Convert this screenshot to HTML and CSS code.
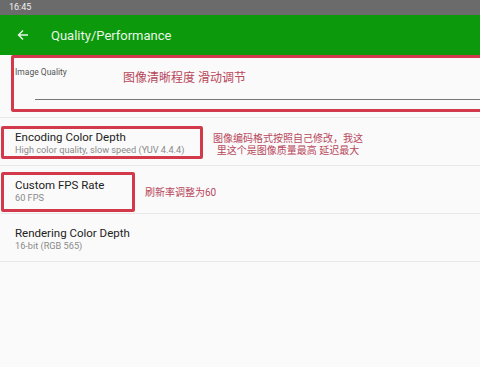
FILE: index.html
```html
<html>
    <head>
        <meta charset="UTF-8">
        <meta name="viewport" content="width=device-width, initial-scale=1.0">

        <title>Quality/Performance</title>

        <link rel="stylesheet" href="styles.css">
    </head>

    <body>
        <div class="statusbar">16:45</div>
        <div class="toolbar">
            <svg class="back" width="12" height="12" viewBox="0 0 12 12">
                <path d="M11 6H1.5M6 1.5L1.5 6L6 10.5" fill="none" stroke="#e8f5e8" stroke-width="1.4"/>
            </svg>
            <span class="title">Quality/Performance</span>
        </div>

        <div class="list">
            <div class="item slider-item">
                <div class="label">Image Quality</div>
                <div class="track"></div>
                <div class="mark mark-quality"></div>
                <div class="note note-quality">图像清晰程度 滑动调节</div>
            </div>

            <div class="item">
                <div class="name">Encoding Color Depth</div>
                <div class="sub">High color quality, slow speed (YUV 4.4.4)</div>
                <div class="mark mark-encoding"></div>
                <div class="note note-encoding">图像编码格式按照自己修改，我这<br>里这个是图像质量最高 延迟最大</div>
            </div>

            <div class="item">
                <div class="name">Custom FPS Rate</div>
                <div class="sub">60 FPS</div>
                <div class="mark mark-fps"></div>
                <div class="note note-fps">刷新率调整为60</div>
            </div>

            <div class="item">
                <div class="name">Rendering Color Depth</div>
                <div class="sub">16-bit (RGB 565)</div>
            </div>
        </div>
    </body>
</html>
```

FILE: styles.css
```css
body{
    margin: 0;
    background-color: #fafafa;
    font-family: Roboto, "Noto Sans CJK SC", sans-serif;
    overflow: hidden;
}
.statusbar{
    height: 15px;
    line-height: 15px;
    padding-left: 9px;
    background-color: #6b6b6b;
    color: #f2f2f2;
    font-size: 9px;
}
.toolbar{
    height: 40px;
    display: flex;
    align-items: center;
    background-color: #0c9a0c;
}
.back{
    margin-left: 17px;
}
.title{
    margin-left: 22px;
    color: #e8f5e8;
    font-size: 13px;
}
.item{
    position: relative;
    padding: 12px 15px 9px;
    border-bottom: 1px solid #e8e8e8;
}
.slider-item{
    height: 62px;
    padding: 0;
}
.label{
    padding: 12px 0 0 15px;
    font-size: 8.5px;
    color: #555;
}
.track{
    margin: 22px 0 0 35px;
    height: 1px;
    background-color: #777;
}
.name{
    font-size: 11.5px;
    line-height: 14px;
    color: #222;
}
.sub{
    font-size: 9.2px;
    line-height: 12px;
    color: #8a8a8a;
}
.mark{
    position: absolute;
    border: 3px solid #d23a4c;
    border-radius: 2px;
}
.mark-quality{
    left: 11px;
    top: 0;
    width: 480px;
    height: 51px;
}
.mark-encoding{
    left: 1px;
    top: 8px;
    width: 196px;
    height: 27px;
}
.mark-fps{
    left: 1px;
    top: 6px;
    width: 128px;
    height: 34px;
}
.note{
    position: absolute;
    color: #b8475a;
    font-size: 10px;
    line-height: 12px;
}
.note-quality{
    left: 123px;
    top: 16px;
    font-size: 12px;
    line-height: 14px;
}
.note-encoding{
    left: 213px;
    top: 15px;
    text-align: center;
}
.note-fps{
    left: 145px;
    top: 21px;
}
```
